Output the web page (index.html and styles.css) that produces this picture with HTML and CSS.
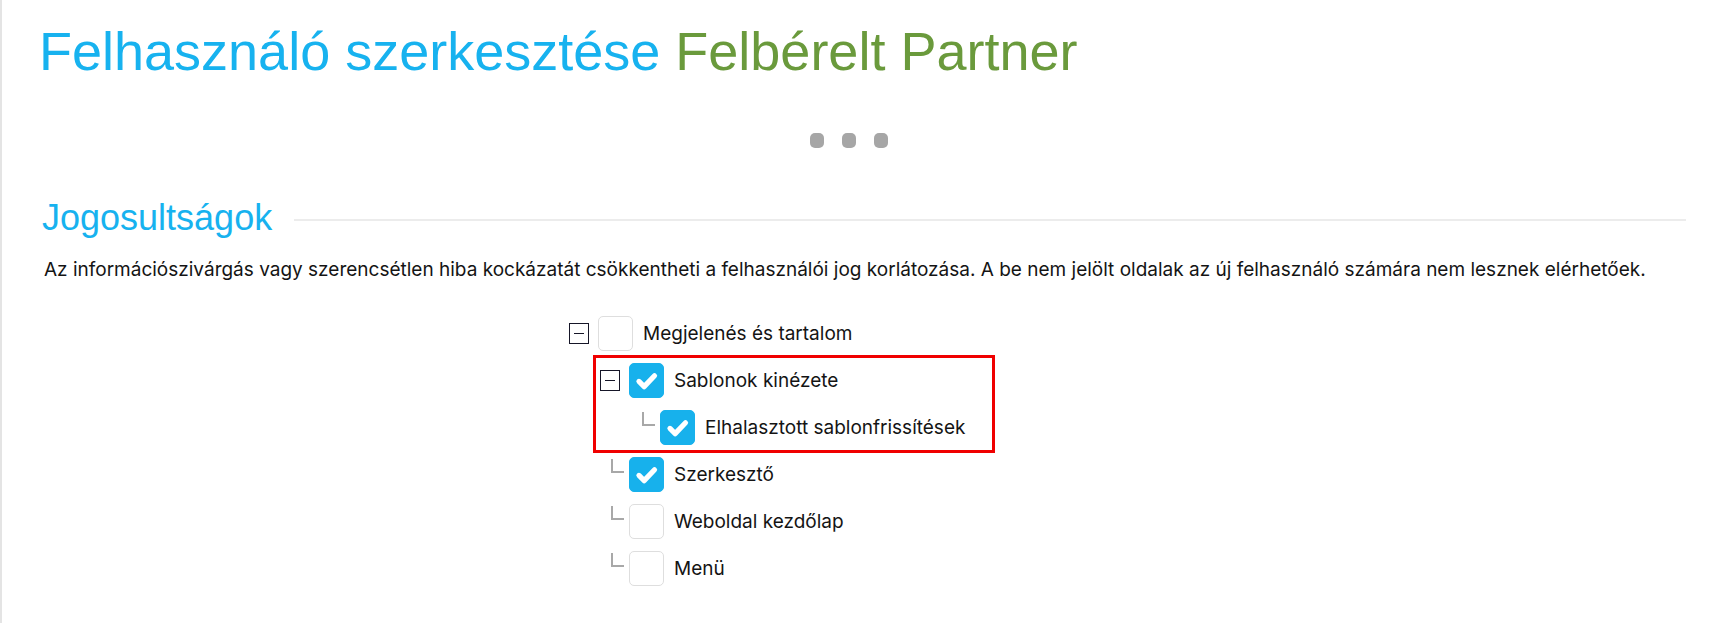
FILE: index.html
```html
<!DOCTYPE html>
<html lang="hu">
<head>
<meta charset="utf-8">
<title>Felhasználó szerkesztése</title>
<link rel="stylesheet" href="styles.css">
</head>
<body>
<div class="page">
  <h1 class="title"><span class="title-main">Felhasználó szerkesztése</span> <span class="title-sub">Felbérelt Partner</span></h1>

  <div class="loader"><span class="dot"></span><span class="dot"></span><span class="dot"></span></div>

  <div class="section-head">
    <h2 class="section-title">Jogosultságok</h2>
    <div class="section-rule"></div>
  </div>

  <p class="desc">Az információszivárgás vagy szerencsétlen hiba kockázatát csökkentheti a felhasználói jog korlátozása. A be nem jelölt oldalak az új felhasználó számára nem lesznek elérhetőek.</p>

  <div class="tree">
    <div class="row lvl-0">
      <span class="slot"><span class="toggle"></span></span>
      <span class="check"></span>
      <span class="label">Megjelenés és tartalom</span>
    </div>
    <div class="row lvl-1">
      <span class="slot"><span class="toggle"></span></span>
      <span class="check on"><svg viewBox="0 0 35 35"><path d="M9.5 18.5 L15 24 L26 12.5"/></svg></span>
      <span class="label">Sablonok kinézete</span>
    </div>
    <div class="row lvl-2">
      <span class="slot"><span class="elbow"></span></span>
      <span class="check on"><svg viewBox="0 0 35 35"><path d="M9.5 18.5 L15 24 L26 12.5"/></svg></span>
      <span class="label">Elhalasztott sablonfrissítések</span>
    </div>
    <div class="row lvl-1">
      <span class="slot"><span class="elbow"></span></span>
      <span class="check on"><svg viewBox="0 0 35 35"><path d="M9.5 18.5 L15 24 L26 12.5"/></svg></span>
      <span class="label">Szerkesztő</span>
    </div>
    <div class="row lvl-1">
      <span class="slot"><span class="elbow"></span></span>
      <span class="check"></span>
      <span class="label">Weboldal kezdőlap</span>
    </div>
    <div class="row lvl-1">
      <span class="slot"><span class="elbow"></span></span>
      <span class="check"></span>
      <span class="label">Menü</span>
    </div>
    <div class="highlight"></div>
  </div>
</div>
</body>
</html>
```

FILE: styles.css
```css
* { box-sizing: border-box; }

html, body {
  margin: 0;
  padding: 0;
  background: #ffffff;
}

body {
  border-left: 2px solid #e4e4e4;
  min-height: 623px;
  font-family: Inter, "Noto Sans", sans-serif;
  color: #141414;
}

.page {
  padding: 0 36px 0 40px;
}

.title {
  margin: 0 0 0 -3px;
  padding-top: 24px;
  font-family: "Liberation Sans", Arial, sans-serif;
  font-weight: 400;
  font-size: 54px;
  line-height: 54px;
}

.title-main { color: #17b2ef; }
.title-sub { color: #6a9a3c; }

.loader {
  display: flex;
  justify-content: center;
  gap: 18px;
  margin-top: 55px;
  padding-right: 30px;
}

.dot {
  width: 14px;
  height: 15px;
  border-radius: 5px;
  background: #a6a6a6;
}

.section-head {
  display: flex;
  align-items: center;
  gap: 22px;
  margin-top: 50px;
}

.section-title {
  margin: 0;
  font-family: "Liberation Sans", Arial, sans-serif;
  font-weight: 400;
  font-size: 36px;
  line-height: 40px;
  color: #17b2ef;
  white-space: nowrap;
}

.section-rule {
  flex: 1;
  height: 2px;
  background: #ececec;
  margin-top: 4px;
}

.desc {
  margin: 19px 0 0 2px;
  font-size: 19px;
  line-height: 26px;
}

.tree {
  position: relative;
  margin: 27px 0 0 527px;
  width: 440px;
}

.row {
  display: flex;
  align-items: center;
  height: 47px;
}

.lvl-1 { padding-left: 31px; }
.lvl-2 { padding-left: 62px; }

.slot {
  width: 20px;
  height: 35px;
  margin-right: 9px;
  display: flex;
  align-items: center;
  flex: none;
}

.toggle {
  width: 21px;
  height: 21px;
  border: 1.5px solid #161628;
  display: flex;
  align-items: center;
  justify-content: center;
}

.toggle::before {
  content: "";
  width: 10px;
  height: 1.5px;
  background: #161628;
}

.elbow {
  align-self: flex-start;
  margin-top: 2px;
  margin-left: 11px;
  width: 13px;
  height: 14px;
  border-left: 2px solid #a8a8a8;
  border-bottom: 2px solid #a8a8a8;
  flex: none;
}

.check {
  width: 35px;
  height: 35px;
  border: 1px solid #dedede;
  border-radius: 5px;
  background: #fff;
  flex: none;
}

.check.on {
  background: #17b1ec;
  border-color: #17b1ec;
}

.check svg {
  display: block;
  width: 33px;
  height: 33px;
  fill: none;
  stroke: #ffffff;
  stroke-width: 5.5;
  stroke-linecap: round;
  stroke-linejoin: round;
}

.label {
  margin-left: 10px;
  font-size: 19px;
  white-space: nowrap;
}

.highlight {
  position: absolute;
  left: 24px;
  top: 45px;
  width: 402px;
  height: 98px;
  border: 3px solid #f00000;
  pointer-events: none;
}
```
